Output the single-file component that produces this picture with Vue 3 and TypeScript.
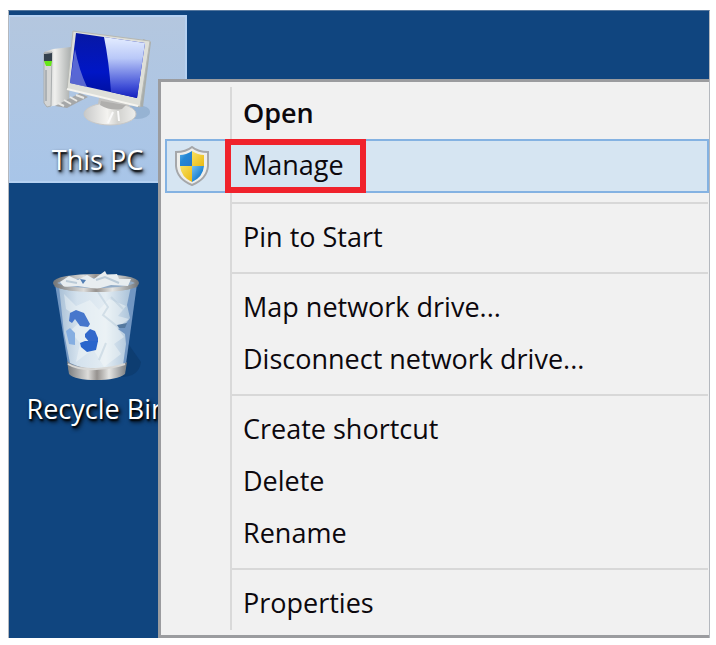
<script setup lang="ts">
interface MenuEntry {
  label: string
  primary?: boolean
  active?: boolean
}

const groups: MenuEntry[][] = [
  [{ label: 'Open', primary: true }, { label: 'Manage', active: true }],
  [{ label: 'Pin to Start' }],
  [{ label: 'Map network drive...' }, { label: 'Disconnect network drive...' }],
  [{ label: 'Create shortcut' }, { label: 'Delete' }, { label: 'Rename' }],
  [{ label: 'Properties' }],
]
</script>

<template>
  <main class="desktop">
    <button type="button" class="shortcut computer selected">
      <svg width="110" height="106" viewBox="42 25 110 106" aria-hidden="true">
        <defs>
          <linearGradient id="tower" x1="0" x2="1">
            <stop offset="0" stop-color="#b9bcbd" />
            <stop offset=".4" stop-color="#f0f0ee" />
            <stop offset="1" stop-color="#aaaead" />
          </linearGradient>
          <linearGradient id="screen" x1="0" y1="0" x2="0" y2="1">
            <stop offset="0" stop-color="#0718a4" />
            <stop offset=".6" stop-color="#0016c6" />
            <stop offset="1" stop-color="#000f9a" />
          </linearGradient>
          <linearGradient id="glare" x1="0" y1="0" x2="0" y2="1">
            <stop offset="0" stop-color="#e4edff" />
            <stop offset=".35" stop-color="#b9c8f8" />
            <stop offset=".8" stop-color="#4352d8" />
            <stop offset="1" stop-color="#1420be" />
          </linearGradient>
          <linearGradient id="base" x1="0" x2="1">
            <stop offset="0" stop-color="#c8c9c9" />
            <stop offset=".45" stop-color="#f4f3f0" />
            <stop offset=".65" stop-color="#d2d2cf" />
            <stop offset="1" stop-color="#eeeeec" />
          </linearGradient>
        </defs>
        <ellipse cx="136" cy="112" rx="13" ry="7" fill="#7f9fc2" opacity=".5" />
        <path d="M43 52 52 49 70 47 68 100 58 105 46 107 43 103Z" fill="url(#tower)" />
        <path d="M43 53 51 52 50 106 46 107 43 103Z" fill="#d4d5d4" stroke="#aaaeaf" stroke-width="1" />
        <path d="M43 54 51 53V61L43 61Z" fill="#35424e" />
        <path d="M43 61 51 61 50 66 45 66Z" fill="#65e817" />
        <path d="M45 70V101" stroke="#adb2b5" stroke-width="2" />
        <path d="M54 106 79 93 87 97 66 108Z" fill="#a5a7a8" />
        <path d="M57 103 63 106M63 100 70 104M69 97 76 101M75 95 83 98" stroke="#e8e8e5" stroke-width="2" />
        <path d="M98 98 128 104 130 112 96 110Z" fill="#c2c1bf" />
        <ellipse cx="109" cy="114" rx="26" ry="11" fill="url(#base)" stroke="#c8c8c7" />
        <path d="M100 101 125 105 121 109Q109 111 99 105Z" fill="#b0afad" />
        <path d="M112 112 107 123M117 111 118 121" stroke="#fafafa" stroke-width="2" />
        <path d="M142 39 150 42 142 107 137 106Z" fill="#a8adab" />
        <path d="M72 31 149 41 139 107 66 89Z" fill="#dedfd9" stroke="#b6b8b3" stroke-width="1" />
        <path d="M75 33 144 43 136 98 69 83Z" fill="url(#screen)" />
        <path d="M103 37 144 43 136 98 110 92Q108 61 103 37Z" fill="url(#glare)" />
        <path d="M74 49Q78 70 86 87L69 83Z" fill="#8793df" opacity=".65" />
        <path d="M66 89 137 106" stroke="#f5f4ef" stroke-width="2" />
      </svg>
      <span>This PC</span>
    </button>

    <button type="button" class="shortcut recycle">
      <svg width="100" height="114" viewBox="47 269 100 114" aria-hidden="true">
        <defs>
          <linearGradient id="paper" x1="0" x2="1">
            <stop offset="0" stop-color="#a9c0d6" />
            <stop offset=".25" stop-color="#d3e1ed" />
            <stop offset=".65" stop-color="#e4edf3" />
            <stop offset="1" stop-color="#a9c2d9" />
          </linearGradient>
          <linearGradient id="metal" x1="0" x2="1">
            <stop offset="0" stop-color="#77797b" />
            <stop offset=".35" stop-color="#dddcda" />
            <stop offset=".5" stop-color="#96928f" />
            <stop offset=".7" stop-color="#e5e5e3" />
            <stop offset="1" stop-color="#777b7f" />
          </linearGradient>
        </defs>
        <path d="M127 342 141 362Q139 377 121 377Z" fill="#092e59" opacity=".35" />
        <path d="M55 284 137 284 125 371Q97 384 69 371Z" fill="#7196c2" />
        <path d="M59 286 131 286 127 305 130 318 124 326 118 329 125 334 126 344 123 365Q98 376 70 363L64 333Z" fill="url(#paper)" />
        <path d="M64 294 76 306 90 300 99 310 109 299 126 306 118 316 129 319 117 328 124 337 114 344 121 354 104 367 93 349 76 362 80 343 70 331 82 320 66 309Z" fill="#f5f8f8" opacity=".45" />
        <path d="M98 292 108 307 103 315 118 327M106 343 99 360M111 297 123 309" fill="none" stroke="#b4c7d8" stroke-width="2" opacity=".45" />
        <path d="M117 325 127 323 125 328 119 328Z" fill="#55799f" />
        <ellipse cx="96" cy="283" rx="41" ry="7" fill="#93acc7" stroke="url(#metal)" stroke-width="4" />
        <path d="M60 282 69 276 78 280 87 275 94 279 105 271 107 275 117 274 119 279 131 279 128 286 111 285 97 289 78 286 64 287Z" fill="#e8edf0" />
        <path d="M80 279 86 280 83 284Z" fill="#527eb4" />
        <path d="M66 281 77 283M96 280 105 277 119 283" stroke="#bbcbd8" stroke-width="2" fill="none" />
        <path d="M55 285Q63 290 96 290T137 285" fill="none" stroke="url(#metal)" stroke-width="3" />
        <path d="M70 313 76 310 84 313 90 324 88 327 80 326 75 319 72 323 69 321Z" fill="#4777cc" />
        <path d="M85 334 90 329 95 331 98 338 98 342 90 343 85 337Z" fill="#3268cb" />
        <path d="M80 343 85 341 98 341 96 350 87 352 81 347Z" fill="#2965cc" />
        <path d="M66 331 70 328 75 333 75 345 69 344Z" fill="#85aee1" />
        <path d="M67 361Q74 368 96 368T127 362L125 374Q117 380 96 380T69 374Z" fill="url(#metal)" />
        <path d="M68 364Q78 370 96 369T125 364" fill="none" stroke="#d8d8d6" stroke-width="2" />
      </svg>
      <span>Recycle Bin</span>
    </button>

    <nav class="menu" aria-label="This PC">
      <div v-for="(group, index) in groups" :key="index" class="group">
        <button
          v-for="entry in group"
          :key="entry.label"
          type="button"
          class="entry"
          :class="{ primary: entry.primary, active: entry.active }"
        >
          <span class="symbol">
            <svg v-if="entry.active" width="36" height="40" viewBox="0 0 36 40" aria-hidden="true">
              <defs>
                <clipPath id="shield-clip"><path d="M18 5Q24 9 30 9V20Q29 31 18 36Q7 31 6 20V9Q12 9 18 5Z" /></clipPath>
                <linearGradient id="shield-blue" x2="1" y2="1"><stop stop-color="#74c1f1" /><stop offset=".5" stop-color="#2487d4" /><stop offset="1" stop-color="#2778cc" /></linearGradient>
                <linearGradient id="shield-yellow" x2="1" y2="1"><stop stop-color="#f9e467" /><stop offset="1" stop-color="#e9b60c" /></linearGradient>
              </defs>
              <path d="M18 1Q24 6 34 6V20Q33 33 18 39Q3 33 2 20V6Q12 6 18 1Z" fill="#eeeeeb" stroke="#a5a7aa" stroke-width="2" />
              <g clip-path="url(#shield-clip)">
                <path d="M4 3H18V20H4Z" fill="url(#shield-blue)" /><path d="M18 3H32V20H18Z" fill="url(#shield-yellow)" />
                <path d="M4 20H18V38H4Z" fill="url(#shield-yellow)" /><path d="M18 20H32V38H18Z" fill="url(#shield-blue)" />
              </g>
            </svg>
          </span>
          <span class="caption">{{ entry.label }}</span>
        </button>
      </div>
    </nav>
  </main>
</template>

<style>
body { background: #fff; }
</style>

<style scoped>
.desktop {
  position: relative;
  box-sizing: border-box;
  margin: 10px 6px 0 8px;
  padding: 68px 0 0 149px;
  overflow: hidden;
  border: 1px solid #b4b8be;
  border-top-color: #55779e;
  border-bottom: 0;
  background: #10457f;
  font-family: "Open Sans", "Noto Sans", sans-serif;
  font-size: 27px;
  line-height: 32px;
}
button { margin: 0; font: inherit; text-align: left; border: 0; }
.shortcut {
  position: absolute;
  left: 0;
  box-sizing: border-box;
  display: flex;
  flex-direction: column;
  align-items: center;
  width: 176px;
  padding: 0;
  color: #fff;
  background: transparent;
  white-space: nowrap;
  text-shadow: 1px 2px 2px #000, 2px 3px 4px #000;
}
.shortcut svg { display: block; }
.computer { top: 4px; width: 178px; height: 168px; padding-top: 8px; gap: 13px; }
.selected {
  border: 2px solid #b6d1f1;
  border-left-width: 1px;
  background: linear-gradient(#b4c7df, #a8c5e8);
}
.recycle { top: 258px; gap: 10px; }
.menu {
  position: relative;
  box-sizing: border-box;
  padding: 5px 0 6px 4px;
  border: 3px solid #9b9c9f;
  border-right: 0;
  background: #f1f1f1;
}
.menu::before {
  content: "";
  position: absolute;
  inset: 5px auto 5px 69px;
  width: 2px;
  background: #d9d9d9;
}
.group + .group::before {
  content: "";
  display: block;
  height: 2px;
  margin: 9px 1px 7px 67px;
  background: #d8d8d8;
}
.entry {
  position: relative;
  box-sizing: border-box;
  display: flex;
  align-items: center;
  width: 100%;
  height: 52px;
  padding: 0;
  color: #0c080d;
  background: transparent;
}
.symbol { display: flex; justify-content: center; flex: 0 0 60px; }
.caption { padding: 0 18px; white-space: nowrap; }
.primary { font-weight: 600; }
.active {
  height: 54px;
  background: #d6e5f2;
  box-shadow: inset 0 0 0 2px #84b2e2;
}
.active .symbol { padding-right: 6px; flex-basis: 54px; }
.active .caption {
  box-sizing: border-box;
  height: 100%;
  padding: 4px 16px 0 12px;
  border: 6px solid #f0222c;
}
</style>
